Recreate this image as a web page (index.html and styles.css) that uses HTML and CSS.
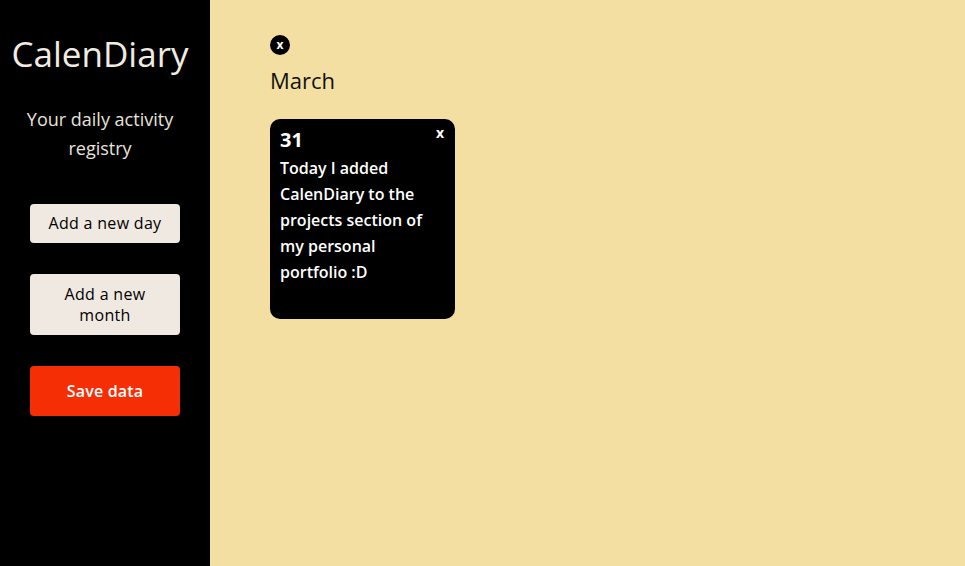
FILE: index.html
```html
<!DOCTYPE html>
<html>
<head>
<meta charset="utf-8">
<link rel="stylesheet" href="styles.css">
</head>
<body>
<div class="app">
  <aside class="sidebar">
    <h1 class="title">CalenDiary</h1>
    <p class="subtitle">Your daily activity registry</p>
    <button class="btn btn-light btn-day">Add a new day</button>
    <button class="btn btn-light btn-month">Add a new month</button>
    <button class="btn btn-save">Save data</button>
  </aside>
  <main class="main">
    <section class="month">
      <button class="month-close">x</button>
      <h2 class="month-name">March</h2>
      <div class="days">
        <article class="day">
          <div class="day-head">
            <span class="day-num">31</span>
            <span class="day-close">x</span>
          </div>
          <p class="day-text">Today I added CalenDiary to the projects section of my personal portfolio :D</p>
        </article>
      </div>
    </section>
  </main>
</div>
</body>
</html>
```
FILE: styles.css
```css
* { box-sizing: border-box; }
html, body { margin: 0; padding: 0; height: 100%; }
body { font-family: "Open Sans", "DejaVu Sans", sans-serif; background: #f4dfa2; }
.app { display: flex; height: 566px; }
.sidebar {
  width: 210px;
  flex-shrink: 0;
  background: #000;
  display: flex;
  flex-direction: column;
  align-items: center;
  padding-top: 34px;
}
.title {
  margin: 0 10px 0 0;
  font-size: 35px;
  font-weight: 400;
  color: #f1ece2;
  line-height: 40px;
}
.subtitle {
  margin: 31px 10px 0 0;
  width: 170px;
  text-align: center;
  color: #e8e3da;
  font-size: 18px;
  line-height: 29px;
}
.btn {
  width: 150px;
  border: none;
  border-radius: 4px;
  font-family: inherit;
  font-size: 16px;
  line-height: 21px;
  letter-spacing: 0.3px;
  cursor: pointer;
}
.btn-light { background: #efe9e1; color: #000; }
.btn-day { margin-top: 41px; height: 39px; }
.btn-month { margin-top: 31px; height: 61px; padding: 0 30px; }
.btn-save { margin-top: 31px; height: 50px; background: #f52e05; color: #fff; font-weight: 600; letter-spacing: 0.2px; }
.main { flex: 1; padding: 35px 60px; }
.month { display: flex; flex-direction: column; align-items: flex-start; }
.month-close {
  width: 20px; height: 20px;
  border-radius: 50%;
  border: none;
  background: #000;
  color: #fff;
  font-family: inherit;
  font-weight: 700;
  font-size: 12px;
  line-height: 18px;
  padding: 0;
}
.month-name {
  margin: 9px 0 0;
  font-size: 22px;
  font-weight: 400;
  line-height: 32px;
  color: #111;
}
.days { margin-top: 23px; display: flex; gap: 20px; }
.day {
  width: 185px;
  height: 200px;
  background: #000;
  border-radius: 10px;
  padding: 8px 10px 10px;
  color: #fff;
}
.day-head { display: flex; justify-content: space-between; align-items: flex-start; }
.day-num { font-size: 20px; font-weight: 700; line-height: 26px; }
.day-close { font-size: 14px; font-weight: 700; line-height: 18px; margin-top: -3px; margin-right: 1px; }
.day-text { margin: 2px 0 0; font-size: 16px; font-weight: 600; line-height: 26px; }
```
